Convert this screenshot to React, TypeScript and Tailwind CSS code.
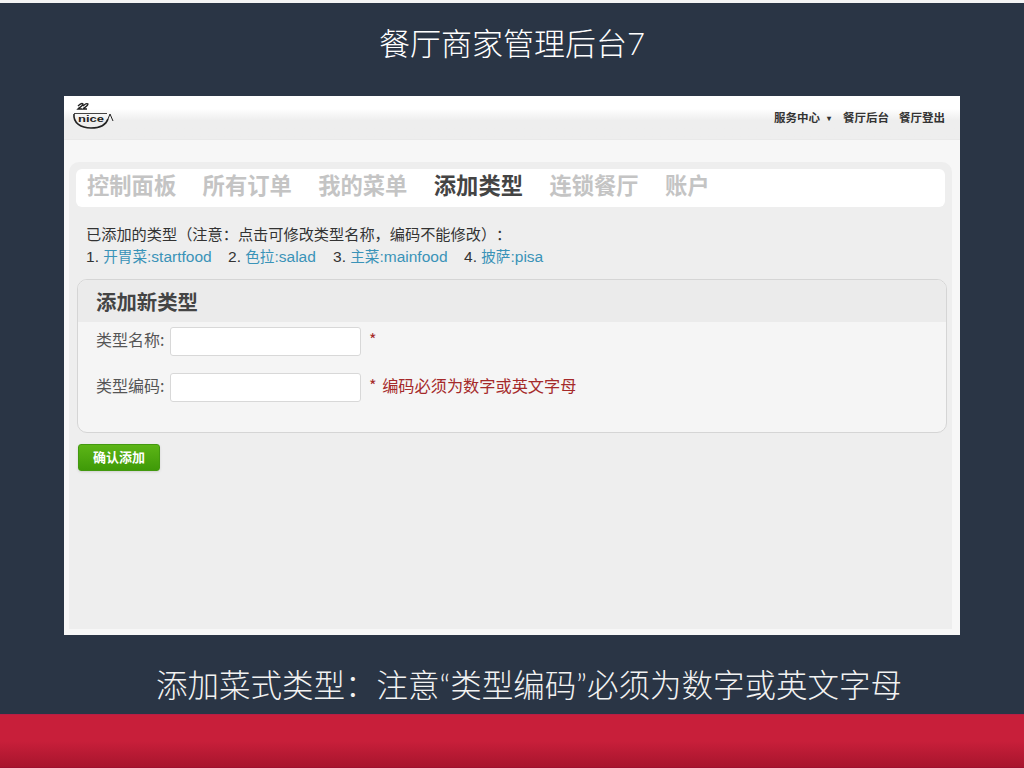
const cjk = "font-['Noto_Sans_CJK_SC',sans-serif]";

function Logo() {
  return (
    <svg width="42" height="34" viewBox="0 0 42 34" className="ml-2">
      <path d="M6 5 C8 3 10 2 11 3 C11 5 8 6 6 8 H10 M11 5 C13 3 15 2 16 3 C16 5 13 6 11 8 H15" stroke="#222" strokeWidth="1.4" fill="none" />
      <path d="M2 12.5 H35" stroke="#444" strokeWidth="1" />
      <path d="M2 13 C1 22 9 27 19 27 C28 27 34 24 36 18" stroke="#222" strokeWidth="1.6" fill="none" />
      <path d="M36 18 L38 13 L41 20" stroke="#222" strokeWidth="1" fill="none" />
      <text x="6" y="21" fontSize="9" fontWeight="700" fill="#222" fontFamily="Liberation Sans, sans-serif" textLength="26" lengthAdjust="spacingAndGlyphs">nice</text>
    </svg>
  );
}

function TypeLink(props: { n: number; cn: string; en: string; width: string }) {
  return (
    <span className={`inline-block ${props.width}`}>
      {props.n}. <span className="text-[#3a93b8]"><span className="text-[14.6px]">{props.cn}</span>{props.en}</span>
    </span>
  );
}

function Field(props: { label: string; hint: string }) {
  return (
    <div className="flex items-center h-[30px]">
      <span className="ml-[18px] w-[74px] pb-[4px] text-[16px] text-[#555]">{props.label}</span>
      <div className="w-[191px] h-[29px] bg-white border border-[#d8d8d8] rounded-[3px]" />
      <span className="ml-[8px] pb-[4px] text-[16.2px] text-[#a52a2a] [word-spacing:2px]">{props.hint}</span>
    </div>
  );
}

export default function App() {
  return (
    <div className={`w-[1024px] h-[768px] overflow-hidden flex flex-col bg-[#2a3545] ${cjk}`}>
      <div className="h-[3px] bg-[#f4f4f4]" />
      <div className="h-[93px] pb-[12px] flex items-center justify-center text-[31px] font-light text-white font-['Lato','Noto_Sans_CJK_SC',sans-serif]">
        餐厅商家管理后台7
      </div>

      <div className="mx-[64px] h-[539px] bg-[#f7f7f7] flex flex-col">
        <div className="h-[44px] flex items-center justify-between bg-gradient-to-b from-white from-[30%] to-[#eeeeee] to-[57%] border-b border-[#e9e9e9]">
          <Logo />
          <div className="flex items-center mr-[15px] text-[11.5px] font-bold text-[#333]">
            <span>服务中心</span>
            <span className="ml-[7px] mr-[12px] text-[8px]">▾</span>
            <span>餐厅后台</span>
            <span className="ml-[10px]">餐厅登出</span>
          </div>
        </div>

        <div className="flex-1 flex flex-col mt-[22px] ml-[5px] mr-[8px] mb-[6px] bg-[#eeeeee] rounded-t-[10px]">
          <div className="mt-[7px] mx-[7px] h-[38px] pb-[7px] bg-white rounded-[6px] flex items-center pl-[11px] gap-[26.4px] text-[22.3px] font-bold text-[#c4c4c4]">
            <span>控制面板</span>
            <span>所有订单</span>
            <span>我的菜单</span>
            <span className="text-[#444]">添加类型</span>
            <span>连锁餐厅</span>
            <span>账户</span>
          </div>

          <div className="mt-[15px] ml-[17px] text-[15.2px] leading-[23px] text-[#333] [text-spacing-trim:space-all]">
            <div>已添加的类型（注意：点击可修改类型名称，编码不能修改）：</div>
            <div className="text-[15.5px] font-['Liberation_Sans','Noto_Sans_CJK_SC',sans-serif]">
              <TypeLink n={1} cn="开胃菜" en=":startfood" width="w-[142px]" />
              <TypeLink n={2} cn="色拉" en=":salad" width="w-[105px]" />
              <TypeLink n={3} cn="主菜" en=":mainfood" width="w-[131px]" />
              <TypeLink n={4} cn="披萨" en=":pisa" width="w-[90px]" />
            </div>
          </div>

          <div className="mt-[10px] ml-[8px] mr-[5px] h-[154px] bg-[#f5f5f5] border border-[#d5d5d5] rounded-[10px] overflow-hidden">
            <div className="h-[42px] pt-[1px] bg-[#ebebeb] flex items-center pl-[18px] text-[20.4px] font-bold text-[#444]">
              添加新类型
            </div>
            <div className="pt-[4px] flex flex-col gap-[16px]">
              <Field label="类型名称:" hint="*" />
              <Field label="类型编码:" hint="* 编码必须为数字或英文字母" />
            </div>
          </div>

          <div className="mt-[11px] ml-[9px] w-[82px] h-[27px] pb-[2px] flex items-center justify-center rounded-[3px] bg-gradient-to-b from-[#5cb516] to-[#3f9a08] border border-[#43990f] shadow-sm text-[13px] font-bold text-white">
            确认添加
          </div>
        </div>
      </div>

      <div className="flex-1 pt-[23px] pl-[34px] flex items-center justify-center text-[31.5px] font-light text-[#f2f2f2] font-['Lato','Noto_Sans_CJK_SC',sans-serif] [text-spacing-trim:space-all]">
        添加菜式类型：注意“类型编码”必须为数字或英文字母
      </div>
      <div className="h-[54px] bg-gradient-to-b from-[#c81f3a] via-[#c81f3a] to-[#a8152d] border-t border-[#b81e45] border-b border-b-[#a01030]" />
    </div>
  );
}
